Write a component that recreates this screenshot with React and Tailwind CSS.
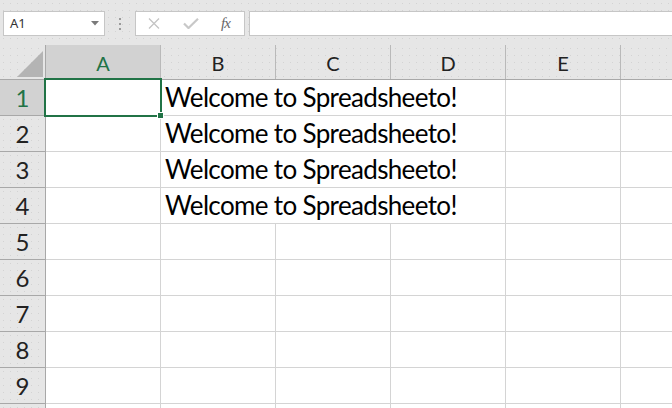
import React from "react";

const dots =
  "bg-[radial-gradient(circle,#d3d3d3_0.7px,transparent_1px)] bg-[length:7px_7px]";

function ColHeader({ label, selected }) {
  return (
    <div
      className={
        "w-[115px] shrink-0 border-r border-[#b9b9b9] flex justify-center pt-[2px] text-[20px] leading-[32px] " +
        (selected ? "bg-[#d2d2d2] text-[#217346]" : "text-[#222222]")
      }
    >
      {label}
    </div>
  );
}

function Row({ n, text, showNum }) {
  const sel = n === 1;
  return (
    <div className="flex h-[36px] shrink-0">
      <div
        className={
          "w-[46px] shrink-0 h-[36px] border-r border-b border-[#a8a8a8] flex justify-center text-[24px] leading-[35px] " +
          (sel ? "bg-[#d2d2d2] text-[#217346]" : "bg-[#e6e6e6] text-[#222222] " + dots)
        }
      >
        {showNum ? n : null}
      </div>
      <div className="w-[115px] shrink-0 border-r border-b border-[#d4d4d4]" />
      {text ? (
        <div className="w-[345px] shrink-0 border-r border-b border-[#d4d4d4] pl-[4px] text-[26px] tracking-[-0.65px] leading-[34px] text-black whitespace-nowrap overflow-visible">
          {text}
        </div>
      ) : (
        <>
          <div className="w-[115px] shrink-0 border-r border-b border-[#d4d4d4]" />
          <div className="w-[115px] shrink-0 border-r border-b border-[#d4d4d4]" />
          <div className="w-[115px] shrink-0 border-r border-b border-[#d4d4d4]" />
        </>
      )}
      <div className="w-[115px] shrink-0 border-r border-b border-[#d4d4d4]" />
      <div className="flex-1 border-b border-[#d4d4d4]" />
    </div>
  );
}

export default function App() {
  const rows = [1, 2, 3, 4, 5, 6, 7, 8, 9, 10];
  const msg = "Welcome to Spreadsheeto!";
  return (
    <div
      className="relative w-[672px] h-[408px] overflow-hidden bg-white"
      style={{ fontFamily: "Lato, 'Open Sans', sans-serif" }}
    >
      {/* Formula bar */}
      <div className={"h-[45px] flex items-start pt-[11px] pl-[3px] bg-[#e6e6e6] " + dots}>
        <div className="w-[102px] h-[25px] shrink-0 bg-white border border-[#c6c6c6] flex items-center pl-[6px] pr-[5px]">
          <span
            className="text-[13px] text-[#333333]"
            style={{ fontFamily: "'Noto Sans', sans-serif" }}
          >
            A1
          </span>
          <svg className="ml-auto" width="8" height="5" viewBox="0 0 8 5">
            <polygon points="0,0 8,0 4,4.5" fill="#7a7a7a" />
          </svg>
        </div>
        <div className="w-[30px] h-[25px] shrink-0 flex flex-col items-center justify-center gap-[3px]">
          <div className="w-[2px] h-[2px] bg-[#9a9a9a]" />
          <div className="w-[2px] h-[2px] bg-[#9a9a9a]" />
          <div className="w-[2px] h-[2px] bg-[#9a9a9a]" />
        </div>
        <div className="w-[110px] h-[25px] shrink-0 bg-white border border-[#c6c6c6] flex items-center pl-[12px]">
          <svg width="12" height="11" viewBox="0 0 12 11">
            <path d="M1 0.5 L11 10.5 M11 0.5 L1 10.5" stroke="#c4c4c4" strokeWidth="1.3" fill="none" />
          </svg>
          <svg className="ml-[23px]" width="16" height="11" viewBox="0 0 16 11">
            <path d="M1 5.5 L5.5 10 L15 0.8" stroke="#c8c8c8" strokeWidth="2.2" fill="none" />
          </svg>
          <span
            className="ml-[22px] text-[15px] italic text-[#666666] leading-none tracking-[-1px]"
            style={{ fontFamily: "'Liberation Serif', serif" }}
          >
            fx
          </span>
        </div>
        <div className="ml-[4px] -mr-[4px] flex-1 h-[25px] bg-white border border-[#c6c6c6]" />
      </div>

      {/* Column headers */}
      <div className="flex h-[35px] border-b border-[#a8a8a8] bg-[#e6e6e6]">
        <div className={"w-[46px] shrink-0 border-r border-[#a8a8a8] flex items-end justify-end pr-[2px] pb-[2px] " + dots}>
          <svg width="26" height="26" viewBox="0 0 26 26">
            <polygon points="26,0 26,26 0,26" fill="#b4b4b4" />
          </svg>
        </div>
        <ColHeader label="A" selected />
        <div className={"flex " + dots}>
          <ColHeader label="B" />
          <ColHeader label="C" />
          <ColHeader label="D" />
          <ColHeader label="E" />
        </div>
        <div className={"flex-1 " + dots} />
      </div>

      {/* Rows */}
      <div className="flex flex-col">
        {rows.map((n) => (
          <Row key={n} n={n} showNum={n <= 9} text={n <= 4 ? msg : null} />
        ))}
      </div>

      {/* Selection overlay */}
      <div className="absolute left-[44px] top-[78px] w-[118px] h-[39px] border-2 border-[#217346] pointer-events-none" />
      <div className="absolute left-[157px] top-[112px] w-[7px] h-[7px] bg-[#217346] border border-white pointer-events-none" />
    </div>
  );
}
